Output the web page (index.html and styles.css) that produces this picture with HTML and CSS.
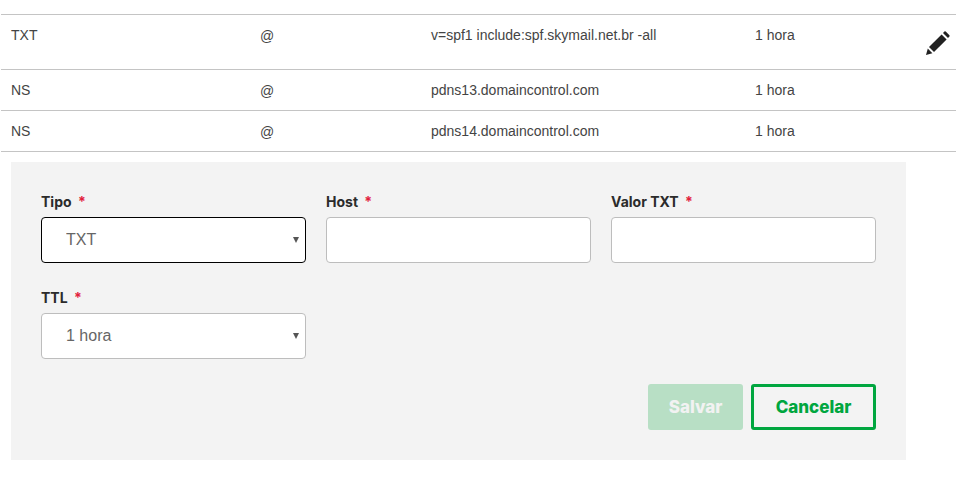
FILE: index.html
```html
<!DOCTYPE html>
<html lang="pt-BR">
<head>
    <meta charset="UTF-8">
    <title>Registros DNS</title>
    <link rel="stylesheet" href="styles.css">
</head>
<body>
    <div class="records">
        <div class="record record-tall">
            <div>TXT</div>
            <div class="host">@</div>
            <div>v=spf1 include:spf.skymail.net.br -all</div>
            <div>1 hora</div>
            <div class="actions">
                <svg class="pencil" viewBox="0 0 24 24" width="24" height="24">
                    <path d="M0 24 L1.8 17.6 L6.4 22.2 Z"/>
                    <path d="M3 16 L15.6 3.4 L20.6 8.4 L8 21 Z"/>
                    <path d="M17 2 L18.4 .6 Q19 0 19.7 .6 L23.4 4.3 Q24 5 23.4 5.6 L22 7 Z"/>
                </svg>
            </div>
        </div>
        <div class="record">
            <div>NS</div>
            <div class="host">@</div>
            <div>pdns13.domaincontrol.com</div>
            <div>1 hora</div>
        </div>
        <div class="record">
            <div>NS</div>
            <div class="host">@</div>
            <div>pdns14.domaincontrol.com</div>
            <div>1 hora</div>
        </div>
    </div>

    <form class="panel">
        <div class="fields">
            <div class="field">
                <label class="field-label">Tipo <span class="req">*</span></label>
                <div class="select-wrap">
                    <select class="control control-focus">
                        <option>TXT</option>
                    </select>
                </div>
            </div>
            <div class="field">
                <label class="field-label">Host <span class="req">*</span></label>
                <input class="control" type="text">
            </div>
            <div class="field">
                <label class="field-label">Valor TXT <span class="req">*</span></label>
                <input class="control" type="text">
            </div>
            <div class="field">
                <label class="field-label">TTL <span class="req">*</span></label>
                <div class="select-wrap">
                    <select class="control">
                        <option>1 hora</option>
                    </select>
                </div>
            </div>
        </div>
        <div class="buttons">
            <button type="button" class="btn btn-save">Salvar</button>
            <button type="button" class="btn btn-cancel">Cancelar</button>
        </div>
    </form>
</body>
</html>
```

FILE: styles.css
```css
body {
    margin: 0;
    background-color: #fff;
    font-family: "Liberation Sans", Arial, sans-serif;
    font-size: 14px;
    color: #444;
}
.records {
    margin: 14px 17px 0 1px;
    border-top: 1px solid #c4c4c4;
}
.record {
    display: grid;
    grid-template-columns: 249px 171px 324px 1fr auto;
    padding: 10px 6px 0 10px;
    height: 30px;
    line-height: 20px;
    border-bottom: 1px solid #c4c4c4;
}
.record-tall {
    height: 44px;
}
.host {
    padding-top: 1px;
}
.actions {
    padding-top: 6px;
}
.pencil {
    display: block;
    fill: #222;
}
.panel {
    margin: 10px 0 0 11px;
    width: 895px;
    box-sizing: border-box;
    padding: 30px 30px;
    background-color: #f3f3f3;
}
.fields {
    display: grid;
    grid-template-columns: repeat(3, 265px);
    column-gap: 20px;
    row-gap: 25px;
}
.field-label {
    display: block;
    height: 20px;
    margin-bottom: 5px;
    font-family: Inter, "Liberation Sans", sans-serif;
    font-weight: 700;
    font-size: 14px;
    line-height: 20px;
    color: #2b2b2b;
}
.req {
    margin-left: 3px;
    font-size: 14px;
    color: #e2203c;
}
.control {
    display: block;
    width: 100%;
    height: 46px;
    box-sizing: border-box;
    padding: 0 24px 2px;
    background-color: #fff;
    border: 1px solid #bdbdbd;
    border-radius: 4px;
    font-family: "Liberation Sans", Arial, sans-serif;
    font-size: 16px;
    color: #666;
    appearance: none;
}
.control-focus {
    border-color: #000;
}
.select-wrap {
    position: relative;
}
.select-wrap::after {
    content: "";
    position: absolute;
    top: 20px;
    right: 7px;
    border-style: solid;
    border-width: 6px 3px 0;
    border-color: #555 transparent transparent;
}
.buttons {
    display: flex;
    justify-content: flex-end;
    gap: 8px;
    margin-top: 25px;
}
.btn {
    height: 46px;
    box-sizing: border-box;
    border-radius: 3px;
    font-family: Inter, "Liberation Sans", sans-serif;
    font-weight: 800;
    font-size: 17px;
    padding: 0;
}
.btn-save {
    width: 95px;
    background-color: #b8dfc5;
    border: none;
    color: #f2f2f2;
}
.btn-cancel {
    width: 125px;
    background-color: transparent;
    border: 3px solid #00a63f;
    color: #00a63f;
}
```
